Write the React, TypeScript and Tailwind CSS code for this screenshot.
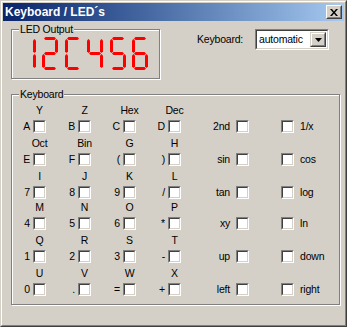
import React from "react";

// segment helpers for the LED display (16x32 digit cell)
const hSeg = (cy: number) =>
  `2,${cy} 3.5,${cy - 1.5} 12.5,${cy - 1.5} 14,${cy} 12.5,${cy + 1.5} 3.5,${cy + 1.5}`;
const vSeg = (cx: number, y1: number, y2: number) =>
  `${cx},${y1} ${cx + 1.5},${y1 + 1.5} ${cx + 1.5},${y2 - 1.5} ${cx},${y2} ${cx - 1.5},${y2 - 1.5} ${cx - 1.5},${y1 + 1.5}`;

const SEGS: Record<string, string> = {
  a: hSeg(1.5),
  g: hSeg(16.5),
  d: hSeg(31.5),
  f: vSeg(1.5, 2, 16),
  b: vSeg(14.5, 2, 16),
  e: vSeg(1.5, 17, 31),
  c: vSeg(14.5, 17, 31),
};

const DIGITS: [string, number][] = [
  ["bc", 0],
  ["abged", 22],
  ["afed", 45],
  ["fgbc", 67],
  ["afgcd", 90],
  ["afgedc", 112],
];

function Led() {
  return (
    <svg width="130" height="34" viewBox="0 0 130 34">
      {DIGITS.map(([segs, x], i) => (
        <g key={i} transform={`translate(${x},0)`} fill="#ff0000">
          {segs.split("").map((s) => (
            <polygon key={s} points={SEGS[s]} />
          ))}
        </g>
      ))}
    </svg>
  );
}

function Check() {
  return (
    <div className="w-[13px] h-[13px] shrink-0 border border-t-[#808080] border-l-[#808080] border-b-white border-r-white">
      <div className="w-full h-full bg-white border border-t-[#404040] border-l-[#404040] border-b-[#d4d0c8] border-r-[#d4d0c8]" />
    </div>
  );
}

const ROWS = [
  { tops: ["Y", "Z", "Hex", "Dec"], keys: ["A", "B", "C", "D"], fn: ["2nd", "1/x"], h: "h-[33px]" },
  { tops: ["Oct", "Bin", "G", "H"], keys: ["E", "F", "(", ")"], fn: ["sin", "cos"], h: "h-[33px]" },
  { tops: ["I", "J", "K", "L"], keys: ["7", "8", "9", "/"], fn: ["tan", "log"], h: "h-[31px]" },
  { tops: ["M", "N", "O", "P"], keys: ["4", "5", "6", "*"], fn: ["xy", "ln"], h: "h-[33px]" },
  { tops: ["Q", "R", "S", "T"], keys: ["1", "2", "3", "-"], fn: ["up", "down"], h: "h-[33px]" },
  { tops: ["U", "V", "W", "X"], keys: ["0", ".", "=", "+"], fn: ["left", "right"], h: "h-[29px]" },
];

function GroupBox({ label, className, children }: { label: string; className: string; children?: React.ReactNode }) {
  return (
    <div
      className={`relative shrink-0 border border-[#808080] shadow-[inset_1px_1px_0_#fff,1px_1px_0_#fff] ${className}`}
    >
      <span className="absolute -top-[7px] left-[7px] px-[1px] bg-[#d4d0c8] leading-[13px]">{label}</span>
      {children}
    </div>
  );
}

export default function App() {
  return (
    <div className="w-[347px] h-[327px] border border-t-[#d4d0c8] border-l-[#d4d0c8] border-r-[#404040] border-b-[#404040] font-['Liberation_Sans',Arial,sans-serif] text-[10.5px] tracking-[-0.2px] leading-[13px] text-black">
      <div className="w-full h-full flex flex-col p-px bg-[#d4d0c8] border border-t-white border-l-white border-r-[#808080] border-b-[#808080]">
        {/* Title bar */}
        <div className="h-[18px] shrink-0 flex items-center justify-between pl-[2px] pr-[2px] bg-linear-to-r from-[#0a246a] to-[#a6caf0]">
          <span className="text-white font-bold text-[12px] tracking-normal leading-[14px]">Keyboard / LED´s</span>
          <div className="w-[16px] h-[14px] border border-t-white border-l-white border-r-[#404040] border-b-[#404040]">
            <div className="w-full h-full flex items-center justify-center bg-[#d4d0c8] border border-t-[#d4d0c8] border-l-[#d4d0c8] border-r-[#808080] border-b-[#808080]">
              <svg width="8" height="7" viewBox="0 0 8 7">
                <path d="M0 0h2l2 2.5L6 0h2L5 3.5 8 7H6L4 4.5 2 7H0l3-3.5z" fill="#000" />
              </svg>
            </div>
          </div>
        </div>

        {/* Top row: LED output + keyboard mode */}
        <div className="flex mt-[8px] ml-[8px]">
          <GroupBox label="LED Output" className="w-[149px] h-[50px]">
            <div className="ml-[8px] mt-[7px]">
              <Led />
            </div>
          </GroupBox>
          <div className="flex items-center h-[21px] ml-[37px]">
            <span className="w-[58px]">Keyboard:</span>
            <div className="w-[74px] h-[21px] border border-t-[#808080] border-l-[#808080] border-b-white border-r-white">
              <div className="w-full h-full flex items-center bg-white border border-t-[#404040] border-l-[#404040] border-b-[#d4d0c8] border-r-[#d4d0c8]">
                <span className="flex-1 pl-[2px]">automatic</span>
                <div className="w-[16px] h-[15px] mr-[1px] border border-t-[#d4d0c8] border-l-[#d4d0c8] border-r-[#404040] border-b-[#404040]">
                  <div className="w-full h-full flex items-center justify-center bg-[#d4d0c8] border border-t-white border-l-white border-r-[#808080] border-b-[#808080]">
                    <svg width="7" height="4" viewBox="0 0 7 4">
                      <path d="M0 0h7L3.5 4z" fill="#000" />
                    </svg>
                  </div>
                </div>
              </div>
            </div>
          </div>
        </div>

        {/* Keyboard group */}
        <div className="ml-[8px] mt-[15px]">
          <GroupBox label="Keyboard" className="w-[329px] h-[211px]">
            <div className="flex flex-col pt-[9px] pl-[2px]">
              {ROWS.map((r, i) => (
                <div key={i} className={`flex flex-col ${r.h}`}>
                  <div className="flex h-[13px]">
                    {r.tops.map((t) => (
                      <div key={t} className="w-[45px] pl-[19px]">
                        <div className="w-[13px] flex justify-center whitespace-nowrap">{t}</div>
                      </div>
                    ))}
                  </div>
                  <div className="flex items-center mt-[3px] h-[13px]">
                    {r.keys.map((k) => (
                      <div key={k} className="w-[45px] flex items-center">
                        <span className="w-[16px] text-right">{k}</span>
                        <div className="ml-[3px]">
                          <Check />
                        </div>
                      </div>
                    ))}
                    <span className="w-[36px] text-right whitespace-nowrap">{r.fn[0]}</span>
                    <div className="ml-[6px]">
                      <Check />
                    </div>
                    <div className="ml-[32px]">
                      <Check />
                    </div>
                    <span className="ml-[6px]">{r.fn[1]}</span>
                  </div>
                </div>
              ))}
            </div>
          </GroupBox>
        </div>
      </div>
    </div>
  );
}
